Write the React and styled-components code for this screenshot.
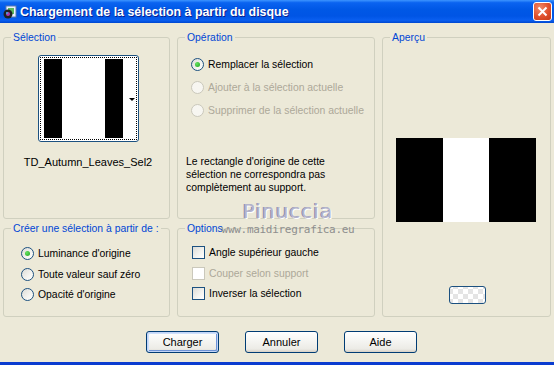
import React from 'react'
import styled, { createGlobalStyle, css } from 'styled-components'

const GlobalStyle = createGlobalStyle`
    html, body {
        margin: 0;
        padding: 0;
        background: #ece9d8;
    }

    body {
        font-family: "Liberation Sans", Arial, sans-serif;
        font-size: 10.4px;
        color: #000;
    }
`

const Window = styled.div`
    position: relative;
    width: 554px;
    height: 365px;
    display: flex;
    flex-direction: column;
    background: #ece9d8;
    overflow: hidden;
    box-sizing: border-box;
    border-bottom: 3px solid #0a3cd0;
`

const TitleBar = styled.div`
    flex: 0 0 23px;
    display: flex;
    align-items: center;
    padding: 0 2px 0 3px;
    background: linear-gradient(to bottom, #3d95ff 0%, #0a63f0 12%, #0058e6 40%, #0055e5 70%, #0a5ff0 88%, #0047d0 100%);
`

const TitleIcon = styled.svg`
    flex: 0 0 14px;
    margin-right: 3px;
`

const TitleText = styled.span`
    flex: 1;
    color: #fff;
    font-weight: bold;
    font-size: 12.4px;
    text-shadow: 1px 1px #0a1f8f;
`

const CloseButton = styled.div`
    width: 19px;
    height: 19px;
    box-sizing: border-box;
    border: 1px solid #fff;
    border-radius: 3px;
    background: radial-gradient(circle at 35% 30%, #f08a6a 0%, #e0502c 55%, #c43a17 100%);
    display: flex;
    align-items: center;
    justify-content: center;
`

const Body = styled.div`
    flex: 1;
    display: flex;
    flex-direction: column;
    padding: 14px 3px 0 3px;
`

const Groups = styled.div`
    display: grid;
    grid-template-columns: 167px 198px 169px;
    grid-template-rows: 182px 89px;
    column-gap: 7px;
    row-gap: 9px;
`

const Group = styled.div`
    position: relative;
    box-sizing: border-box;
    border: 1px solid #d0d0bf;
    border-radius: 3px;
    display: flex;
    flex-direction: column;

    ${props => props.span && css`
        grid-row: 1 / span 2;
        grid-column: 3;
    `}
`

const Legend = styled.span`
    position: absolute;
    top: -7px;
    left: 7px;
    padding: 0 2px;
    line-height: 13px;
    white-space: nowrap;
    color: #0046d5;
    background: #ece9d8;
`

const SelectionContent = styled.div`
    display: flex;
    flex-direction: column;
    padding: 17px 0 0 34px;
`

const ThumbButton = styled.div`
    width: 101px;
    height: 87px;
    box-sizing: border-box;
    border: 1px solid #1c5180;
    border-radius: 3px;
    background: #fff;
    padding: 1px;
`

const FocusRect = styled.div`
    height: 100%;
    box-sizing: border-box;
    border: 1px dotted #000;
    display: flex;
    padding: 1px 2px 1px 3px;
`

const Stripe = styled.div`
    flex: 0 0 ${props => props.w}px;
    background: ${props => props.dark ? '#000' : '#fff'};
    display: flex;
    align-items: center;
    justify-content: flex-end;
`

const DropArrow = styled.span`
    width: 0;
    height: 0;
    border-left: 3px solid transparent;
    border-right: 3px solid transparent;
    border-top: 3px solid #000;
    margin-top: 1px;
`

const ThumbLabel = styled.div`
    margin: 14px 0 0 -15px;
    width: 130px;
    text-align: center;
    line-height: 13px;
    font-size: 11px;
`

const OperationContent = styled.div`
    display: flex;
    flex-direction: column;
    padding: 15px 0 0 13px;
`

const Option = styled.label`
    display: flex;
    align-items: center;
    height: ${props => props.h || 23}px;
    gap: 4px;
    color: ${props => props.disabled ? '#aca899' : '#000'};
    white-space: nowrap;
`

const Radio = styled.span`
    flex: 0 0 13px;
    height: 13px;
    box-sizing: border-box;
    border-radius: 50%;
    border: 1px solid ${props => props.disabled ? '#cac8bb' : '#1c5180'};
    background: ${props => props.disabled
        ? '#f7f6f1'
        : 'linear-gradient(135deg, #dcdcd7 0%, #f4f4f0 60%, #fff 100%)'};
    display: flex;
    align-items: center;
    justify-content: center;

    &::after {
        content: '';
        display: ${props => props.checked ? 'block' : 'none'};
        width: 5px;
        height: 5px;
        border-radius: 50%;
        background: radial-gradient(circle at 35% 35%, #63e35f, #21a121);
    }
`

const Checkbox = styled.span`
    flex: 0 0 13px;
    height: 13px;
    box-sizing: border-box;
    border: 1px solid ${props => props.disabled ? '#cac8bb' : '#1c5180'};
    background: ${props => props.disabled
        ? '#fff'
        : 'linear-gradient(135deg, #dcdcd7 0%, #f4f4f0 60%, #fff 100%)'};
`

const Note = styled.p`
    margin: 33px 0 0 -5px;
    line-height: 13px;
    width: 175px;
`

const CreateContent = styled.div`
    display: flex;
    flex-direction: column;
    padding: 14px 0 0 17px;
`

const OptionsContent = styled.div`
    display: flex;
    flex-direction: column;
    padding: 13px 0 0 14px;
`

const PreviewContent = styled.div`
    display: flex;
    flex-direction: column;
    align-items: flex-start;
    padding: 100px 0 0 13px;
`

const PreviewImage = styled.div`
    display: flex;
    width: 140px;
    height: 84px;
`

const PreviewStripe = styled.div`
    flex: 1;
    background: ${props => props.dark ? '#000' : '#fff'};
`

const SwatchButton = styled.div`
    margin: 64px 0 0 53px;
    width: 37px;
    height: 18px;
    box-sizing: border-box;
    border: 1px solid #1c5180;
    border-radius: 3px;
    background-color: #fff;
    background-image: repeating-conic-gradient(#e4e4e4 0% 25%, #fff 0% 50%);
    background-size: 10px 10px;
    background-position: 3px 2px;
`

const ButtonRow = styled.div`
    display: flex;
    justify-content: center;
    gap: 26px;
    margin-top: 14px;
    padding-left: 9px;
`

const Button = styled.button`
    width: 73px;
    height: 22px;
    box-sizing: border-box;
    border: 1px solid #003c74;
    border-radius: 3px;
    font-family: "Liberation Sans", Arial, sans-serif;
    font-size: 11px;
    color: #000;
    background: linear-gradient(to bottom, #fff 0%, #f6f6f3 40%, #ecebe6 85%, #d6d0c5 100%);
    padding: 0;

    ${props => props.primary && css`
        box-shadow: inset 0 0 0 1px #c2d4f7, inset 1px 1px 0 1px #cee0fb, inset -1px -1px 0 1px #6e93d6;
    `}
`

const Watermark = styled.div`
    position: absolute;
    left: 226px;
    top: 199px;
    width: 124px;
    display: flex;
    flex-direction: column;
    align-items: center;
    pointer-events: none;
`

const WatermarkName = styled.span`
    font-family: "DejaVu Sans", sans-serif;
    font-size: 20px;
    line-height: 25px;
    color: #b4b4cc;
    text-shadow: 1px 1px 0 #fff, -1px 0 0 #8c8ca8;
    letter-spacing: 1px;
`

const WatermarkUrl = styled.span`
    font-family: "DejaVu Sans Mono", monospace;
    font-size: 11px;
    line-height: 12px;
    color: #8e8e8e;
    letter-spacing: -0.3px;
`

const App = () => (
    <>
        <GlobalStyle />
        <Window>
            <TitleBar>
                <TitleIcon width="14" height="14" viewBox="0 0 14 14">
                    <rect x="3" y="1" width="10" height="11" fill="#e8f0ff" stroke="#5a7ab0" />
                    <rect x="5" y="3" width="6" height="6" fill="#5cb85c" />
                    <circle cx="5" cy="9" r="4.5" fill="#222" />
                    <circle cx="5" cy="9" r="2" fill="#b03ab0" />
                    <circle cx="4" cy="8" r="1" fill="#3ab0e0" />
                </TitleIcon>
                <TitleText>Chargement de la sélection à partir du disque</TitleText>
                <CloseButton>
                    <svg width="11" height="11" viewBox="0 0 11 11">
                        <path d="M1.5 1.5 L9.5 9.5 M9.5 1.5 L1.5 9.5" stroke="#fff" strokeWidth="2" />
                    </svg>
                </CloseButton>
            </TitleBar>
            <Body>
                <Groups>
                    <Group>
                        <Legend>Sélection</Legend>
                        <SelectionContent>
                            <ThumbButton>
                                <FocusRect>
                                    <Stripe dark w={18} />
                                    <Stripe w={43} />
                                    <Stripe dark w={18} />
                                    <Stripe w={12}>
                                        <DropArrow />
                                    </Stripe>
                                </FocusRect>
                            </ThumbButton>
                            <ThumbLabel>TD_Autumn_Leaves_Sel2</ThumbLabel>
                        </SelectionContent>
                    </Group>
                    <Group>
                        <Legend>Opération</Legend>
                        <OperationContent>
                            <Option><Radio checked />Remplacer la sélection</Option>
                            <Option disabled><Radio disabled />Ajouter à la sélection actuelle</Option>
                            <Option disabled><Radio disabled />Supprimer de la sélection actuelle</Option>
                            <Note>
                                Le rectangle d'origine de cette sélection ne correspondra pas complètement au support.
                            </Note>
                        </OperationContent>
                    </Group>
                    <Group span>
                        <Legend>Aperçu</Legend>
                        <PreviewContent>
                            <PreviewImage>
                                <PreviewStripe dark />
                                <PreviewStripe />
                                <PreviewStripe dark />
                            </PreviewImage>
                            <SwatchButton />
                        </PreviewContent>
                    </Group>
                    <Group>
                        <Legend>Créer une sélection à partir de :</Legend>
                        <CreateContent>
                            <Option h={21}><Radio checked />Luminance d'origine</Option>
                            <Option h={20}><Radio />Toute valeur sauf zéro</Option>
                            <Option h={21}><Radio />Opacité d'origine</Option>
                        </CreateContent>
                    </Group>
                    <Group>
                        <Legend>Options</Legend>
                        <OptionsContent>
                            <Option h={21}><Checkbox />Angle supérieur gauche</Option>
                            <Option h={20} disabled><Checkbox disabled />Couper selon support</Option>
                            <Option h={21}><Checkbox />Inverser la sélection</Option>
                        </OptionsContent>
                    </Group>
                </Groups>
                <ButtonRow>
                    <Button primary>Charger</Button>
                    <Button>Annuler</Button>
                    <Button>Aide</Button>
                </ButtonRow>
            </Body>
            <Watermark>
                <WatermarkName>Pinuccia</WatermarkName>
                <WatermarkUrl>www.maidiregrafica.eu</WatermarkUrl>
            </Watermark>
        </Window>
    </>
)

export default App
